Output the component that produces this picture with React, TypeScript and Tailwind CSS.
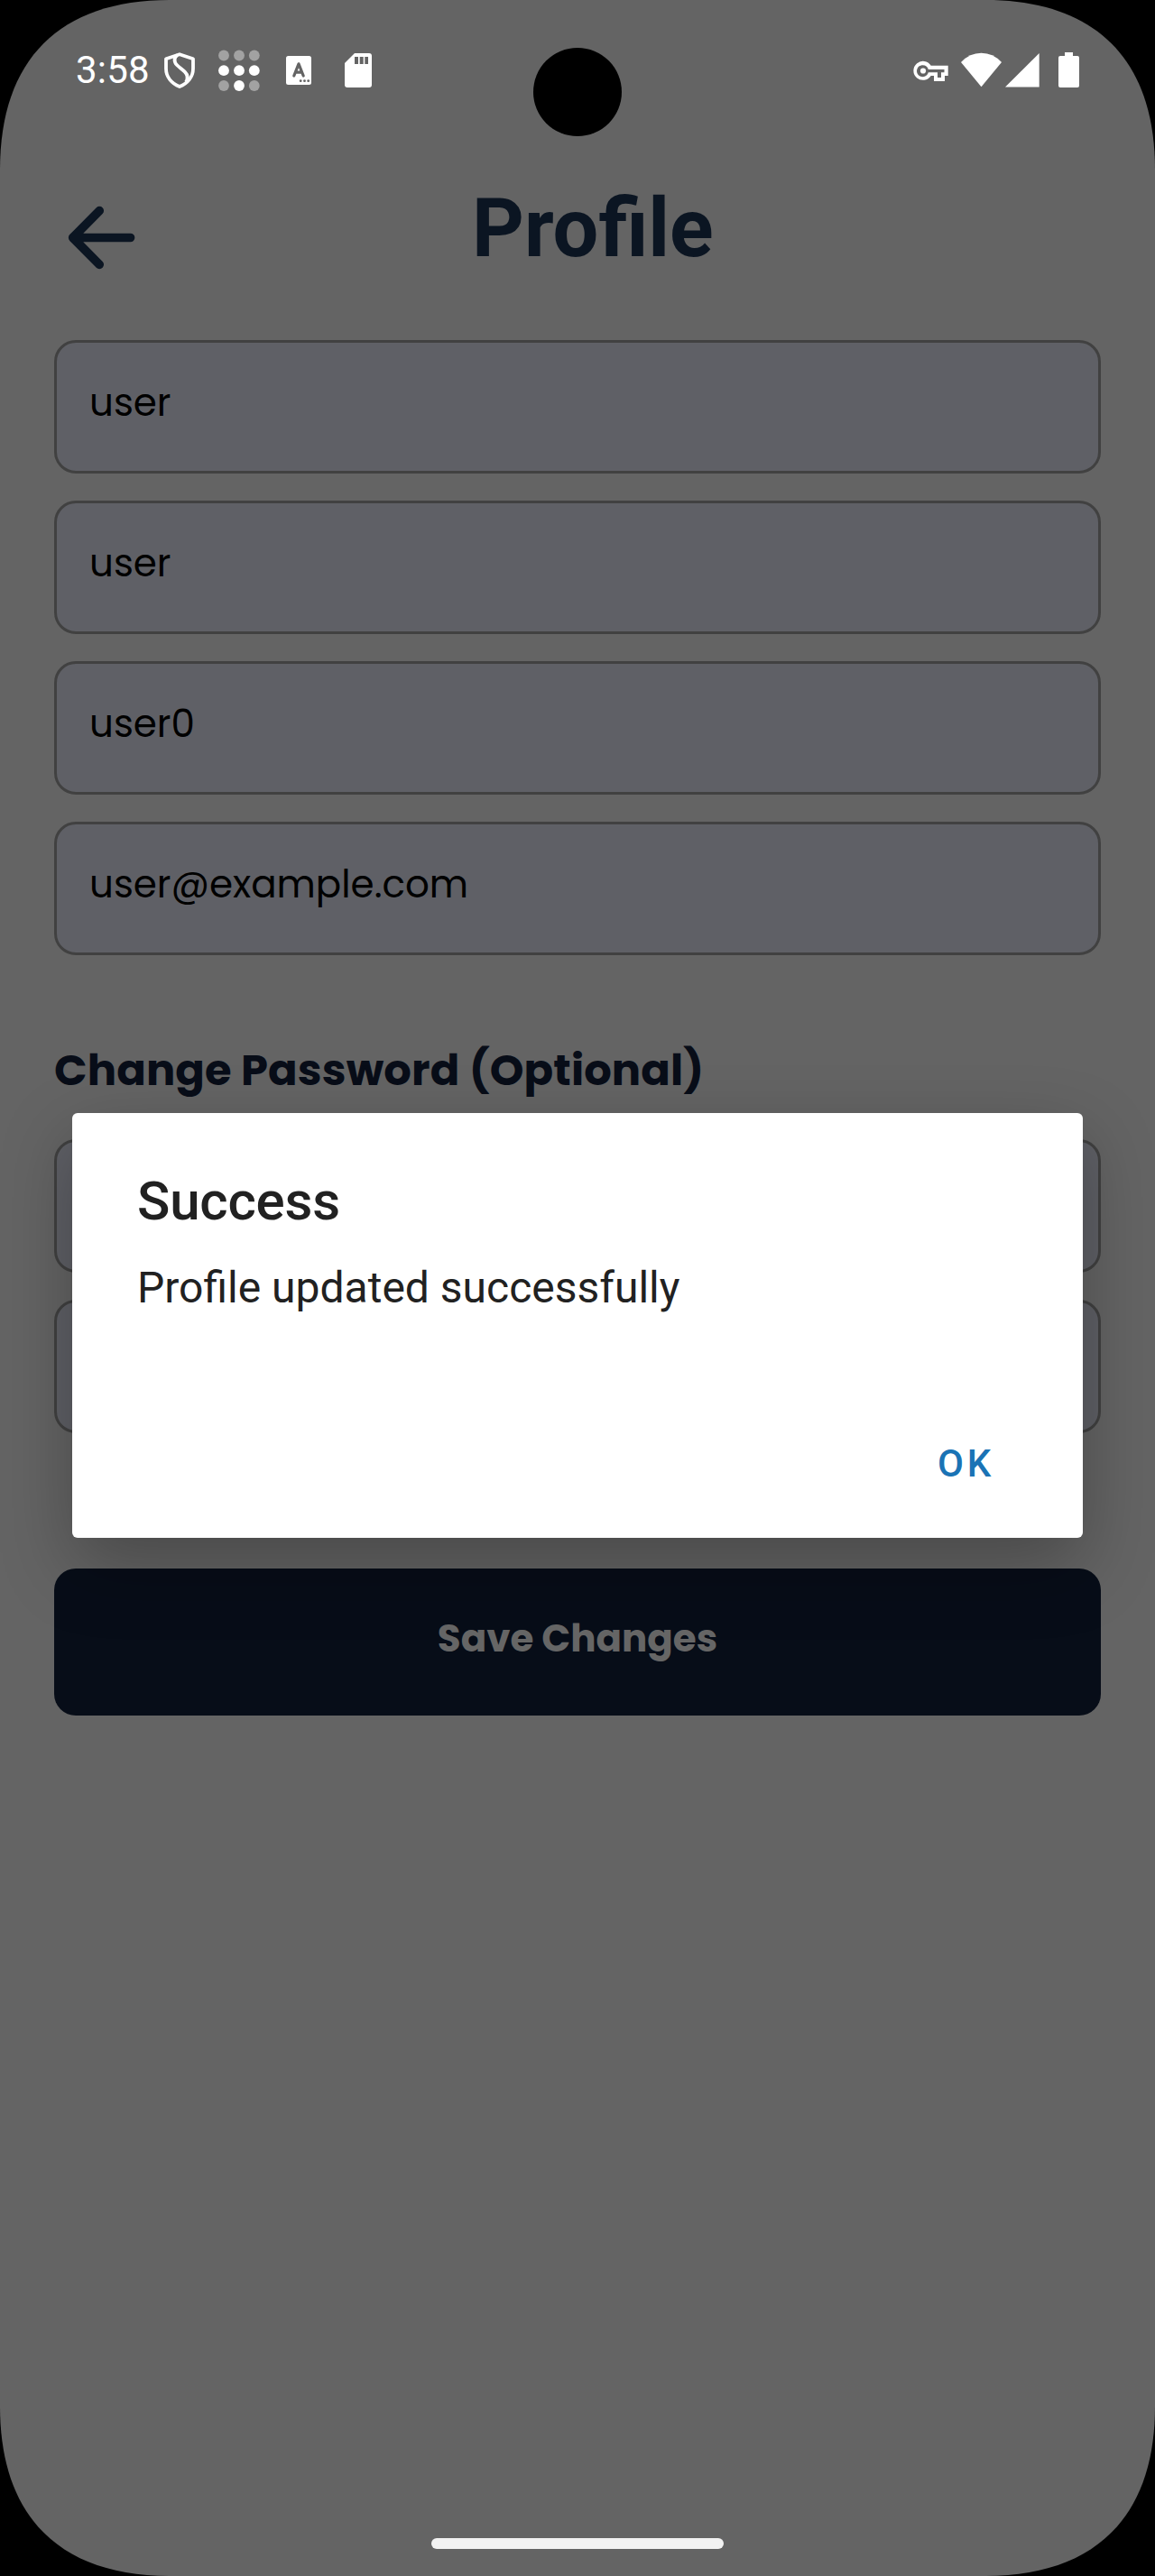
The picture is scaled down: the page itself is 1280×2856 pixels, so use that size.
import type { ReactNode } from 'react'

const POPPINS = 'font-[Poppins,Inter,sans-serif]'

function NotificationIcons() {
  return (
    <svg className="ml-4 h-[48px] w-[236px]" viewBox="180 54 236 48" fill="#fff">
      {/* shield */}
      <g fill="none" stroke="#fff" strokeWidth="3.8" strokeLinejoin="round">
        <path d="M199 60.2 L214 65.2 V76 C214 85.5 207.5 92.5 199 96 C190.5 92.5 184 85.5 184 76 V65.2 Z" />
        <path d="M196.5 61.2 C192.8 63.5 192.5 68.5 196 72 C199 75 202 76.8 204.8 79.6 C208.3 83.2 208.6 87 206 91" />
      </g>
      {/* dot grid */}
      <g fill="#a2a2a2">
        <circle cx="248" cy="61.5" r="5.9" />
        <circle cx="265" cy="61.5" r="5.9" />
        <circle cx="281.8" cy="61.5" r="5.9" />
        <circle cx="248" cy="95" r="5.9" />
        <circle cx="281.8" cy="95" r="5.9" />
      </g>
      <circle cx="248" cy="78.2" r="5.9" />
      <circle cx="265" cy="78.2" r="5.9" />
      <circle cx="281.8" cy="78.2" r="5.9" />
      <circle cx="265" cy="95" r="5.9" />
      {/* keyboard */}
      <rect x="317" y="62" width="28" height="32" rx="2.5" />
      <path d="M325.8 84 L331 70.8 L336.2 84 M328 80.2 H334.5" fill="none" stroke="#646464" strokeWidth="3.2" strokeLinecap="round" strokeLinejoin="round" />
      <g fill="#646464">
        <circle cx="333.2" cy="89.7" r="1.4" />
        <circle cx="337.5" cy="89.7" r="1.4" />
        <circle cx="341.7" cy="89.7" r="1.4" />
      </g>
      {/* sd card */}
      <path d="M393 59 H409 Q412 59 412 62 V94 Q412 97 409 97 H385 Q382 97 382 94 V70 Z" />
      <path d="M393 63h4v8h-4z M398.7 63h4v8h-4z M404.3 63h3.7v8h-3.7z" fill="#646464" />
    </svg>
  )
}

function SystemIcons() {
  return (
    <svg className="ml-auto h-[48px] w-[188px]" viewBox="1010 54 188 48" fill="#fff">
      {/* vpn key */}
      <path d="M1031.7 72.7 H1050.7 V84 H1047 V90 H1035 V84 H1031.7 A10.5 10.5 0 1 1 1031.7 72.7 Z" />
      <path d="M1028.8 77 H1046.5 V80.3 H1043 V86 H1039 V80.3 H1028.8 A6.5 6.5 0 1 1 1028.8 77 Z" fill="#646464" />
      <circle cx="1023" cy="78.5" r="3.1" />
      {/* wifi */}
      <path d="M1087.5 96.3 L1065 69 Q1074.5 58.7 1087.5 58.7 Q1100.5 58.7 1110 69 Z" />
      {/* signal */}
      <path d="M1114 96.6 L1151.7 59 V96.6 Z" />
      {/* battery */}
      <path d="M1180 58 H1189 V62 H1194 Q1196 62 1196 64 V95 Q1196 97 1194 97 H1175 Q1173 97 1173 95 V64 Q1173 62 1175 62 H1180 Z" />
    </svg>
  )
}

function Field({ children }: { children?: ReactNode }) {
  return (
    <div className={`${POPPINS} flex h-[148px] items-center rounded-[24px] border-[3px] border-[#414141] bg-[#5f6066] pb-[9px] pl-[36px] text-[42px] leading-[60px] text-black`}>
      {children}
    </div>
  )
}

export default function App() {
  return (
    <div className="h-[2856px] w-[1280px] bg-black font-[Roboto,sans-serif]">
      <div className="relative flex h-full flex-col overflow-hidden bg-[#646464] [clip-path:path('M0_188_C0_66_66_0_188_0_H1092_C1214_0_1280_66_1280_188_V2668_C1280_2790_1214_2856_1092_2856_H188_C66_2856_0_2790_0_2668_Z')]">
        <div className="flex h-[156px] shrink-0 items-center pl-[84px] pr-[82px] text-[42px] leading-none text-white">
          <span className="w-[80px] whitespace-nowrap tracking-[0.2px]">3:58</span>
          <NotificationIcons />
          <SystemIcons />
        </div>
        <div className="absolute left-[591px] top-[53px] size-[98px] rounded-full bg-black" />

        <header className="flex h-[221px] shrink-0 items-start pl-[72px] pt-[45px]">
          <svg className="mt-[22px] h-[80px] w-[80px]" viewBox="72 223 80 80" fill="none" stroke="#0b1522" strokeWidth="9.7" strokeLinecap="round" strokeLinejoin="round">
            <path d="M110.2 233.7 L80.7 263.5 L110.2 293.3 M82 263.5 H144.5" />
          </svg>
          <h1 className="ml-[371px] text-[90px] font-bold leading-[106px] text-[#0b1522]">Profile</h1>
        </header>

        <main className="flex flex-col px-[60px]">
          <div className="flex flex-col gap-[30px]">
            <Field>user</Field>
            <Field>user</Field>
            <Field>user0</Field>
            <Field>user@example.com</Field>
          </div>
          <h2 className={`${POPPINS} mt-[92px] h-[112px] whitespace-nowrap text-[48px] font-bold leading-[72px] tracking-[0.12px] text-[#080d18]`}>
            Change Password (Optional)
          </h2>
          <div className="flex flex-col gap-[30px]">
            <Field />
            <Field />
          </div>
          <button className={`${POPPINS} mt-[150px] flex h-[163px] items-center justify-center rounded-[24px] bg-[#070d18] pb-[8px] text-[42px] font-bold text-[#666666]`}>
            Save Changes
          </button>
        </main>

        <div className="absolute inset-0 px-[80px] pt-[1234px]">
          <div role="dialog" className="flex h-[471px] flex-col rounded-[6px] bg-white pl-[72px] pr-[98px] text-[#212121] shadow-[0_30px_80px_rgba(0,0,0,0.28)]">
            <h3 className="mt-[63px] text-[60px] font-medium leading-[70px] tracking-[-0.2px]">Success</h3>
            <p className="mt-[31px] text-[48px] leading-[60px]">Profile updated successfully</p>
            <button className="ml-auto mt-[135px] text-[42px] font-medium leading-[60px] tracking-[3.75px] text-[#1a73b5]">OK</button>
          </div>
        </div>

        <div className="absolute bottom-[30px] left-[478px] h-[12px] w-[324px] rounded-full bg-[#f2f2f2]" />
      </div>
    </div>
  )
}
